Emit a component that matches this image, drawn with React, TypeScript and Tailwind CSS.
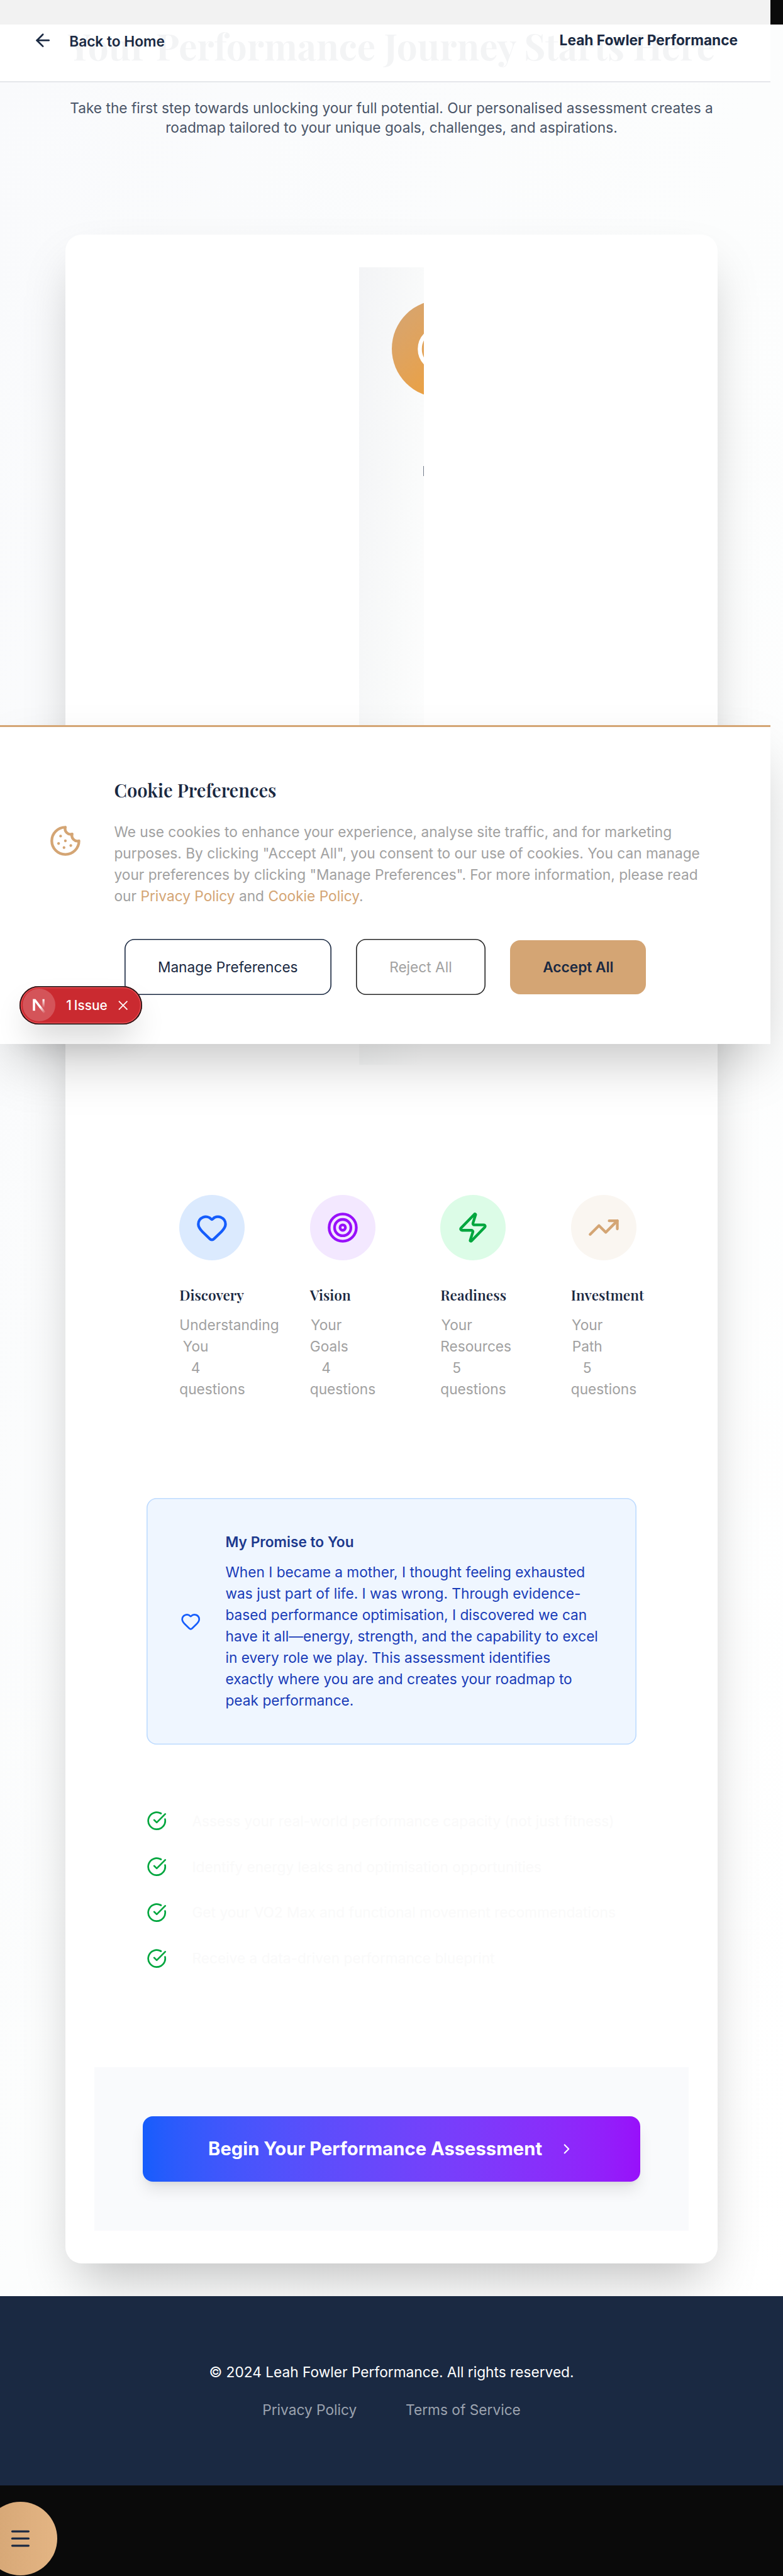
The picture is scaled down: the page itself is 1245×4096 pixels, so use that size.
import type { ReactNode } from "react";
import { ArrowLeft, ChevronRight, Cookie, Heart, Menu, Target, TrendingUp, Zap } from "lucide-react";

type Stage = {
  title: string;
  subtitle: string;
  count: string;
  circle: string;
  icon: ReactNode;
};

const stages: Stage[] = [
  {
    title: "Discovery",
    subtitle: "Understanding You",
    count: "4 questions",
    circle: "bg-[#dbeafe] text-[#155dfc]",
    icon: <Heart className="size-[51.9px]" />,
  },
  {
    title: "Vision",
    subtitle: "Your Goals",
    count: "4 questions",
    circle: "bg-[#f3e8ff] text-[#9810fa]",
    icon: <Target className="size-[51.9px]" />,
  },
  {
    title: "Readiness",
    subtitle: "Your Resources",
    count: "5 questions",
    circle: "bg-[#dcfce7] text-[#00a63e]",
    icon: <Zap className="size-[51.9px]" />,
  },
  {
    title: "Investment",
    subtitle: "Your Path",
    count: "5 questions",
    circle: "bg-[#faf6f1] text-[#d4a574]",
    icon: <TrendingUp className="size-[51.9px]" />,
  },
];

const benefits = [
  "Assess your real-world performance capacity (not just fitness)",
  "Identify energy leaks and optimisation opportunities",
  "Get your VO2 Max and functional movement recommendations",
  "Receive a data-driven performance blueprint",
];

function CheckCircle() {
  return (
    <svg
      viewBox="0 0 24 24"
      fill="none"
      stroke="currentColor"
      strokeWidth="2"
      strokeLinecap="round"
      strokeLinejoin="round"
      className="size-[32.4px] shrink-0 text-[#00a63e]"
    >
      <path d="M21.801 10A10 10 0 1 1 17 3.335" />
      <path d="m9 11 3 3L22 4" />
    </svg>
  );
}

function TopBar() {
  return (
    <nav className="absolute left-0 top-0 flex h-[131.3px] w-[1225px] items-start justify-between border-b-2 border-[#e5e7eb] bg-white/95 px-[51.9px] text-[22.7px] leading-[34px] text-[#1a2942]">
      <a className="mt-[48.7px] flex items-center gap-[25.9px] font-semibold">
        <ArrowLeft className="-mt-0.5 size-[32.4px]" />
        Back to Home
      </a>
      <span className="mt-[47.3px] font-bold">Leah Fowler Performance</span>
    </nav>
  );
}

function IntroPanel() {
  return (
    <div className="relative mx-auto h-[1267.8px] w-[103.75px] overflow-hidden bg-linear-to-br from-[#f3f4f6] via-[#f9fafa] to-white pl-[51.9px] pt-[51.9px]">
      <div className="flex size-[155.6px] items-center justify-center rounded-full bg-linear-to-br from-[#d4a574] to-[#f59e0b] text-white">
        <Target className="size-[77.8px]" />
      </div>
      <div className="absolute left-[102.3px] top-[315.8px] h-[16.6px] w-px bg-[#1a2942]/60" />
    </div>
  );
}

function Stages() {
  return (
    <div className="ml-[181.5px] mt-[207.2px] flex gap-[103.75px]">
      {stages.map((s) => (
        <div key={s.title} className="w-[103.75px] shrink-0">
          <div className={`flex size-[103.75px] items-center justify-center rounded-full ${s.circle}`}>{s.icon}</div>
          <h3 className="mt-[38.5px] font-['Playfair_Display','Liberation_Serif',serif] text-[22.7px] font-semibold leading-[34px] text-[#1a2942]">
            {s.title}
          </h3>
          <div className="mt-[14.1px] w-[51.9px] text-center text-[22.7px] leading-[34.1px] text-[#a1a1a1]">
            <p>{s.subtitle}</p>
            <p>{s.count}</p>
          </div>
        </div>
      ))}
    </div>
  );
}

function PromiseCard() {
  return (
    <div className="mx-auto mt-[155.2px] flex h-[392.2px] w-[778.4px] items-center rounded-[16px] bg-[#eff6ff] pl-[53.6px] shadow-[inset_0_0_0_1.62px_#bedbff]">
      <Heart className="size-[32.4px] shrink-0 text-[#155dfc]" />
      <div className="ml-[39.2px] mt-px w-[593.5px] text-[22.7px] leading-[34.05px]">
        <h4 className="font-semibold text-[#1c398e]">My Promise to You</h4>
        <p className="mt-[13.4px] text-[#193cb8]">
          When I became a mother, I thought feeling exhausted was just part of life. I was wrong. Through evidence-based
          performance optimisation, I discovered we can have it all—energy, strength, and the capability to excel in
          every role we play. This assessment identifies exactly where you are and creates your roadmap to peak
          performance.
        </p>
      </div>
    </div>
  );
}

function CookieBanner() {
  return (
    <section className="absolute left-0 top-[1152.8px] h-[507.2px] w-[1225.2px] border-t-[3px] border-[#d4a574] bg-white shadow-[0_40.5px_81px_-19.5px_rgba(0,0,0,0.25)]">
      <div className="mt-[80.2px] flex items-center gap-[51.9px] pl-[77.7px]">
        <Cookie className="-mt-[3px] size-[51.9px] shrink-0 text-[#d4a574]" />
        <div className="w-[945px]">
          <h3 className="font-['Playfair_Display','Liberation_Serif',serif] text-[29.2px] font-semibold leading-[39px] text-[#1a2942]">
            Cookie Preferences
          </h3>
          <p className="mt-[30.6px] text-[22.7px] leading-[34.05px] text-[#a1a1a1]">
            We use cookies to enhance your experience, analyse site traffic, and for marketing purposes. By clicking
            "Accept All", you consent to our use of cookies. You can manage your preferences by clicking "Manage
            Preferences". For more information, please read our <a className="text-[#d4a574]">Privacy Policy</a> and{" "}
            <a className="text-[#d4a574]">Cookie Policy</a>.
          </p>
        </div>
      </div>
      <div className="mt-[51.4px] flex items-center justify-center gap-[38.9px] text-[22.7px] leading-[34px]">
        <button className="h-[89px] w-[329.1px] rounded-[16px] text-[#1a2942] shadow-[inset_0_0_0_1.62px_#1a2942]">
          Manage Preferences
        </button>
        <button className="h-[89px] w-[206.5px] rounded-[16px] text-[#a1a1a1] shadow-[inset_0_0_0_1.62px_#262626]">
          Reject All
        </button>
        <button className="h-[86.2px] w-[216.4px] rounded-[16px] bg-[#d4a574] font-semibold text-[#1a2942]">
          Accept All
        </button>
      </div>
    </section>
  );
}

function IssueBadge() {
  return (
    <div className="absolute left-[31px] top-[1567.5px] flex h-[61.5px] w-[194.8px] items-center rounded-full bg-[#ca2a30] pl-[4.7px] text-white shadow-[inset_0_0_0_1.62px_#171717,inset_0_0_0_3.24px_#e5484d,0_26px_52px_-13px_rgba(0,0,0,0.24)]">
      <div className="size-[51.9px] shrink-0 rounded-full bg-white/20">
        <svg viewBox="0 0 288 288" className="size-full">
          <defs>
            <linearGradient id="diagonal" gradientUnits="userSpaceOnUse" x1="150" y1="165" x2="192" y2="218">
              <stop stopColor="#fff" />
              <stop offset="1" stopColor="#fff" stopOpacity="0" />
            </linearGradient>
            <linearGradient id="bar" gradientUnits="userSpaceOnUse" x1="184" y1="93" x2="184" y2="170">
              <stop stopColor="#fff" />
              <stop offset="1" stopColor="#fff" stopOpacity="0" />
            </linearGradient>
          </defs>
          <path d="M90 93h20v102h-20z" fill="#fff" />
          <path d="M90 93h24l88 114-15 13z" fill="url(#diagonal)" />
          <path d="M175 93h18v77h-18z" fill="url(#bar)" />
        </svg>
      </div>
      <span className="ml-[17.6px] mt-px text-[20.8px] font-medium leading-[26px] [word-spacing:-1.5px]">1 Issue</span>
      <svg viewBox="0 0 16 16" className="ml-[17.6px] size-[15.4px]" stroke="#fff" strokeWidth="1.8" fill="none">
        <path d="M1 1l14 14M15 1L1 15" />
      </svg>
    </div>
  );
}

export default function App() {
  return (
    <div className="relative flex h-[4096px] w-[1245px] flex-col overflow-hidden bg-[#0a0a0a] font-['Inter',sans-serif]">
      <main className="mt-[38.9px] h-[3611.8px] shrink-0 bg-linear-to-br from-[#f9fafc] via-[#fcfdfd] to-white pt-px">
        <h1 className="text-center font-['Playfair_Display','Liberation_Serif',serif] text-[58.36px] font-bold leading-[64px] text-[#1a2942]">
          Your Performance Journey Starts Here
        </h1>
        <p className="mx-auto mt-[52px] w-[1037.5px] text-center text-[22.7px] leading-[31.1px] text-[#4a5568]">
          Take the first step towards unlocking your full potential. Our personalised assessment creates a roadmap
          tailored to your unique goals, challenges, and aspirations.
        </p>

        <div className="mx-auto mt-[154.8px] h-[3226px] w-[1037.5px] rounded-[25.9px] bg-white pt-[51.9px] shadow-[0_40.5px_81px_-19.5px_rgba(0,0,0,0.25)]">
          <IntroPanel />
          <Stages />
          <PromiseCard />

          <ul className="ml-[129.7px] mt-[104.8px] flex flex-col gap-[38.9px]">
            {benefits.map((b) => (
              <li key={b} className="flex h-[34px] items-center gap-[39.6px] text-[22.7px] leading-[34px] text-[#fafafa]">
                <CheckCircle />
                {b}
              </li>
            ))}
          </ul>

          <div className="mx-auto mt-[155.2px] flex h-[260.8px] w-[945.8px] items-center justify-center bg-[#f9fafc]">
            <button className="flex h-[103.75px] w-[790.5px] items-center justify-center gap-[25.9px] rounded-[16px] bg-linear-to-r from-[#155dfc] to-[#9810fa] text-[29.2px] font-bold text-white shadow-[0_16.2px_24.3px_-4.9px_rgba(0,0,0,0.1),0_6.5px_9.7px_-6.5px_rgba(0,0,0,0.1)]">
              Begin Your Performance Assessment
              <ChevronRight className="size-[25.9px]" />
            </button>
          </div>
        </div>
      </main>

      <footer className="h-[301.6px] shrink-0 bg-[#1a2942] pt-[104.8px] text-center text-[22.7px] leading-[34px]">
        <p className="text-white">© 2024 Leah Fowler Performance. All rights reserved.</p>
        <div className="mt-[25.8px] flex justify-center gap-[77.8px] text-[#9ca3af]">
          <a>Privacy Policy</a>
          <a>Terms of Service</a>
        </div>
      </footer>

      <TopBar />
      <CookieBanner />
      <IssueBadge />

      <button className="absolute left-[-25.9px] top-[3978px] flex size-[116.7px] items-center justify-center rounded-full bg-linear-to-r from-[#d4a574] to-[#e4b584] text-[#1a2942]">
        <Menu className="size-[38.9px]" />
      </button>
    </div>
  );
}
